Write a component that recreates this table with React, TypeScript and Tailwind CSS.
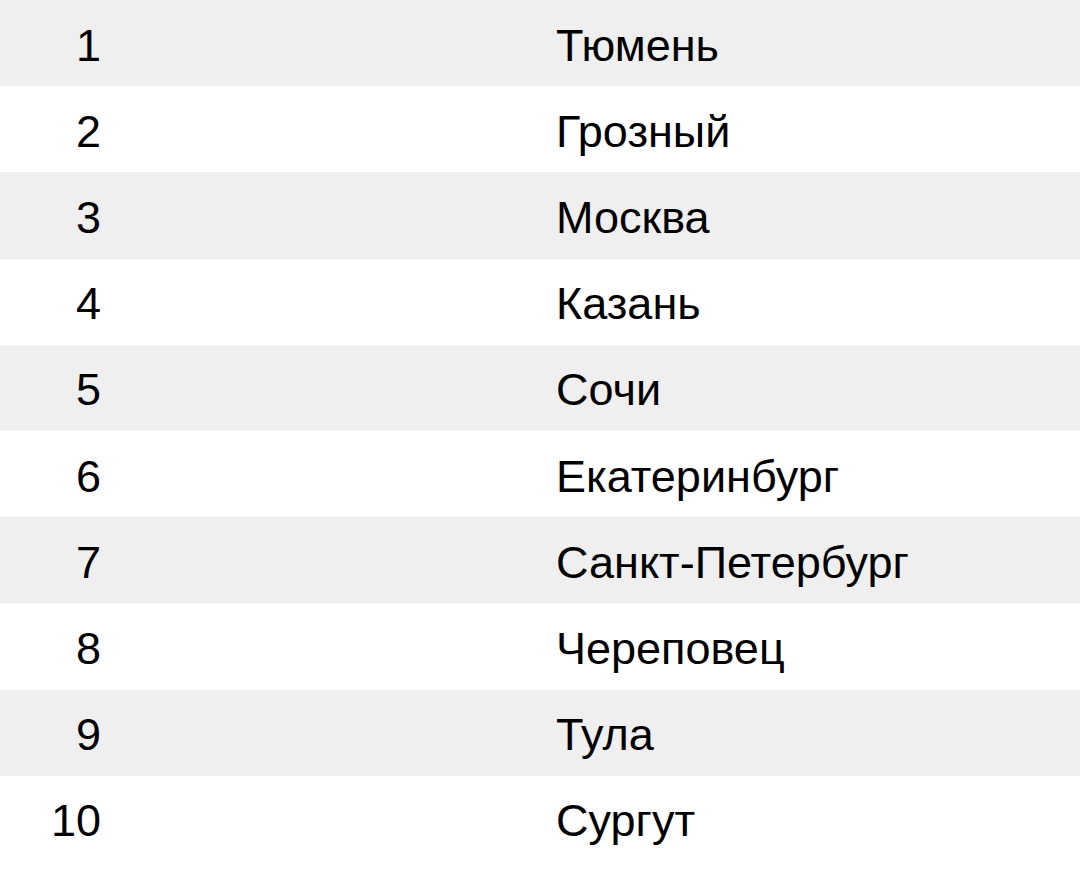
import React from "react";

const cities = [
  "Тюмень",
  "Грозный",
  "Москва",
  "Казань",
  "Сочи",
  "Екатеринбург",
  "Санкт-Петербург",
  "Череповец",
  "Тула",
  "Сургут",
];

const App = () => {
  return (
    <div className="w-[1080px] h-[874px] bg-white font-['Liberation_Sans',Arial,sans-serif] text-[45px] text-black">
      {cities.map((city, i) => (
        <div
          key={city}
          className={`grid grid-cols-[101px_1fr] gap-[455px] items-center h-[86.2px] ${
            i % 2 === 0 ? "bg-[#efefef]" : "bg-white"
          }`}
        >
          <div className="text-right leading-none pt-[4px]">{i + 1}</div>
          <div className="leading-none pt-[4px]">{city}</div>
        </div>
      ))}
    </div>
  );
};

export default App;
